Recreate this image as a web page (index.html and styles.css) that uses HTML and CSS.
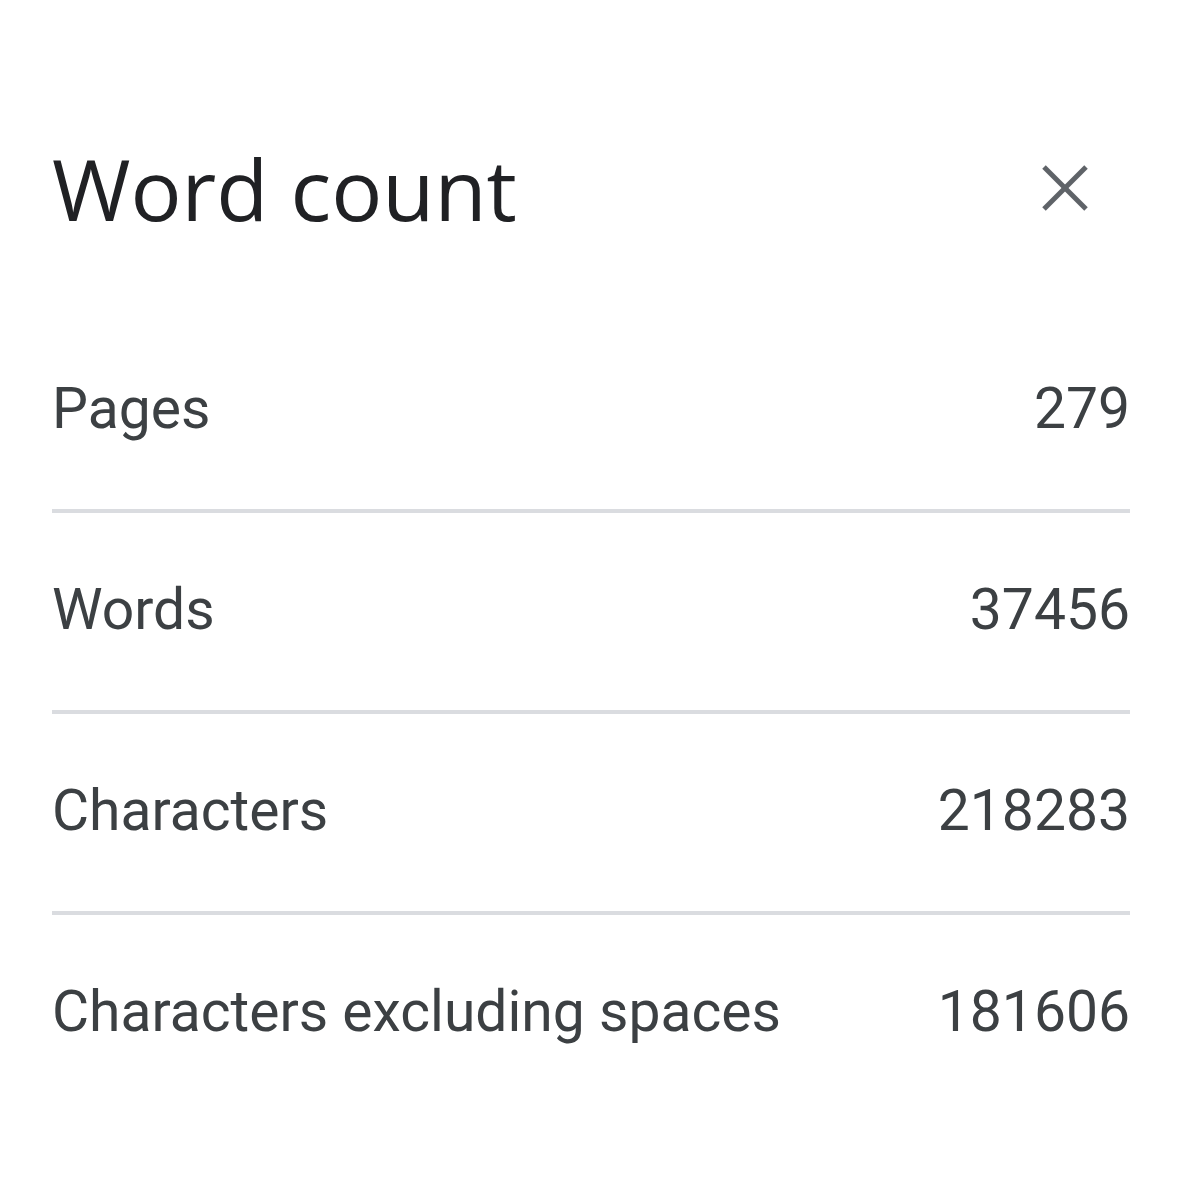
FILE: index.html
```html
<!DOCTYPE html>
<html lang="en">
<head>
  <meta charset="UTF-8">
  <meta name="viewport" content="width=device-width, initial-scale=1.0">
  <title>Word count</title>
  <link rel="stylesheet" href="styles.css">
</head>
<body>
  <div class="dialog">
    <div class="dialog-header">
      <h1>Word count</h1>
      <button class="close-btn" aria-label="Close">
        <svg width="48" height="48" viewBox="0 0 48 48">
          <line x1="3" y1="3" x2="45" y2="45" />
          <line x1="45" y1="3" x2="3" y2="45" />
        </svg>
      </button>
    </div>

    <div class="stats">
      <div class="stat-row">
        <span class="label">Pages</span>
        <span class="value">279</span>
      </div>
      <div class="stat-row">
        <span class="label">Words</span>
        <span class="value">37456</span>
      </div>
      <div class="stat-row">
        <span class="label">Characters</span>
        <span class="value">218283</span>
      </div>
      <div class="stat-row">
        <span class="label">Characters excluding spaces</span>
        <span class="value">181606</span>
      </div>
    </div>
  </div>
</body>
</html>
```

FILE: styles.css
```css
body {
  margin: 0;
  padding: 0;
  background-color: #fff;
  font-family: Roboto, "Liberation Sans", Arial, sans-serif;
}

.dialog {
  padding: 138px 70px 0 52px;
}

.dialog-header {
  display: flex;
  justify-content: space-between;
  align-items: center;
  margin-bottom: 137px;
}

.dialog-header h1 {
  margin: 0;
  font-family: "Open Sans", sans-serif;
  font-size: 85px;
  font-weight: 400;
  line-height: 100px;
  color: #202124;
}

.close-btn {
  display: flex;
  padding: 0;
  margin-right: 41px;
  border: none;
  background: none;
  cursor: pointer;
}

.close-btn line {
  stroke: #5f6368;
  stroke-width: 5;
}

.stat-row {
  display: flex;
  justify-content: space-between;
  padding: 63px 0 66px;
  border-bottom: 4px solid #dadce0;
  font-size: 57px;
  line-height: 68px;
  color: #3c4043;
}

.stat-row:first-child {
  padding-top: 0;
}

.stat-row:last-child {
  border-bottom: none;
}
```
